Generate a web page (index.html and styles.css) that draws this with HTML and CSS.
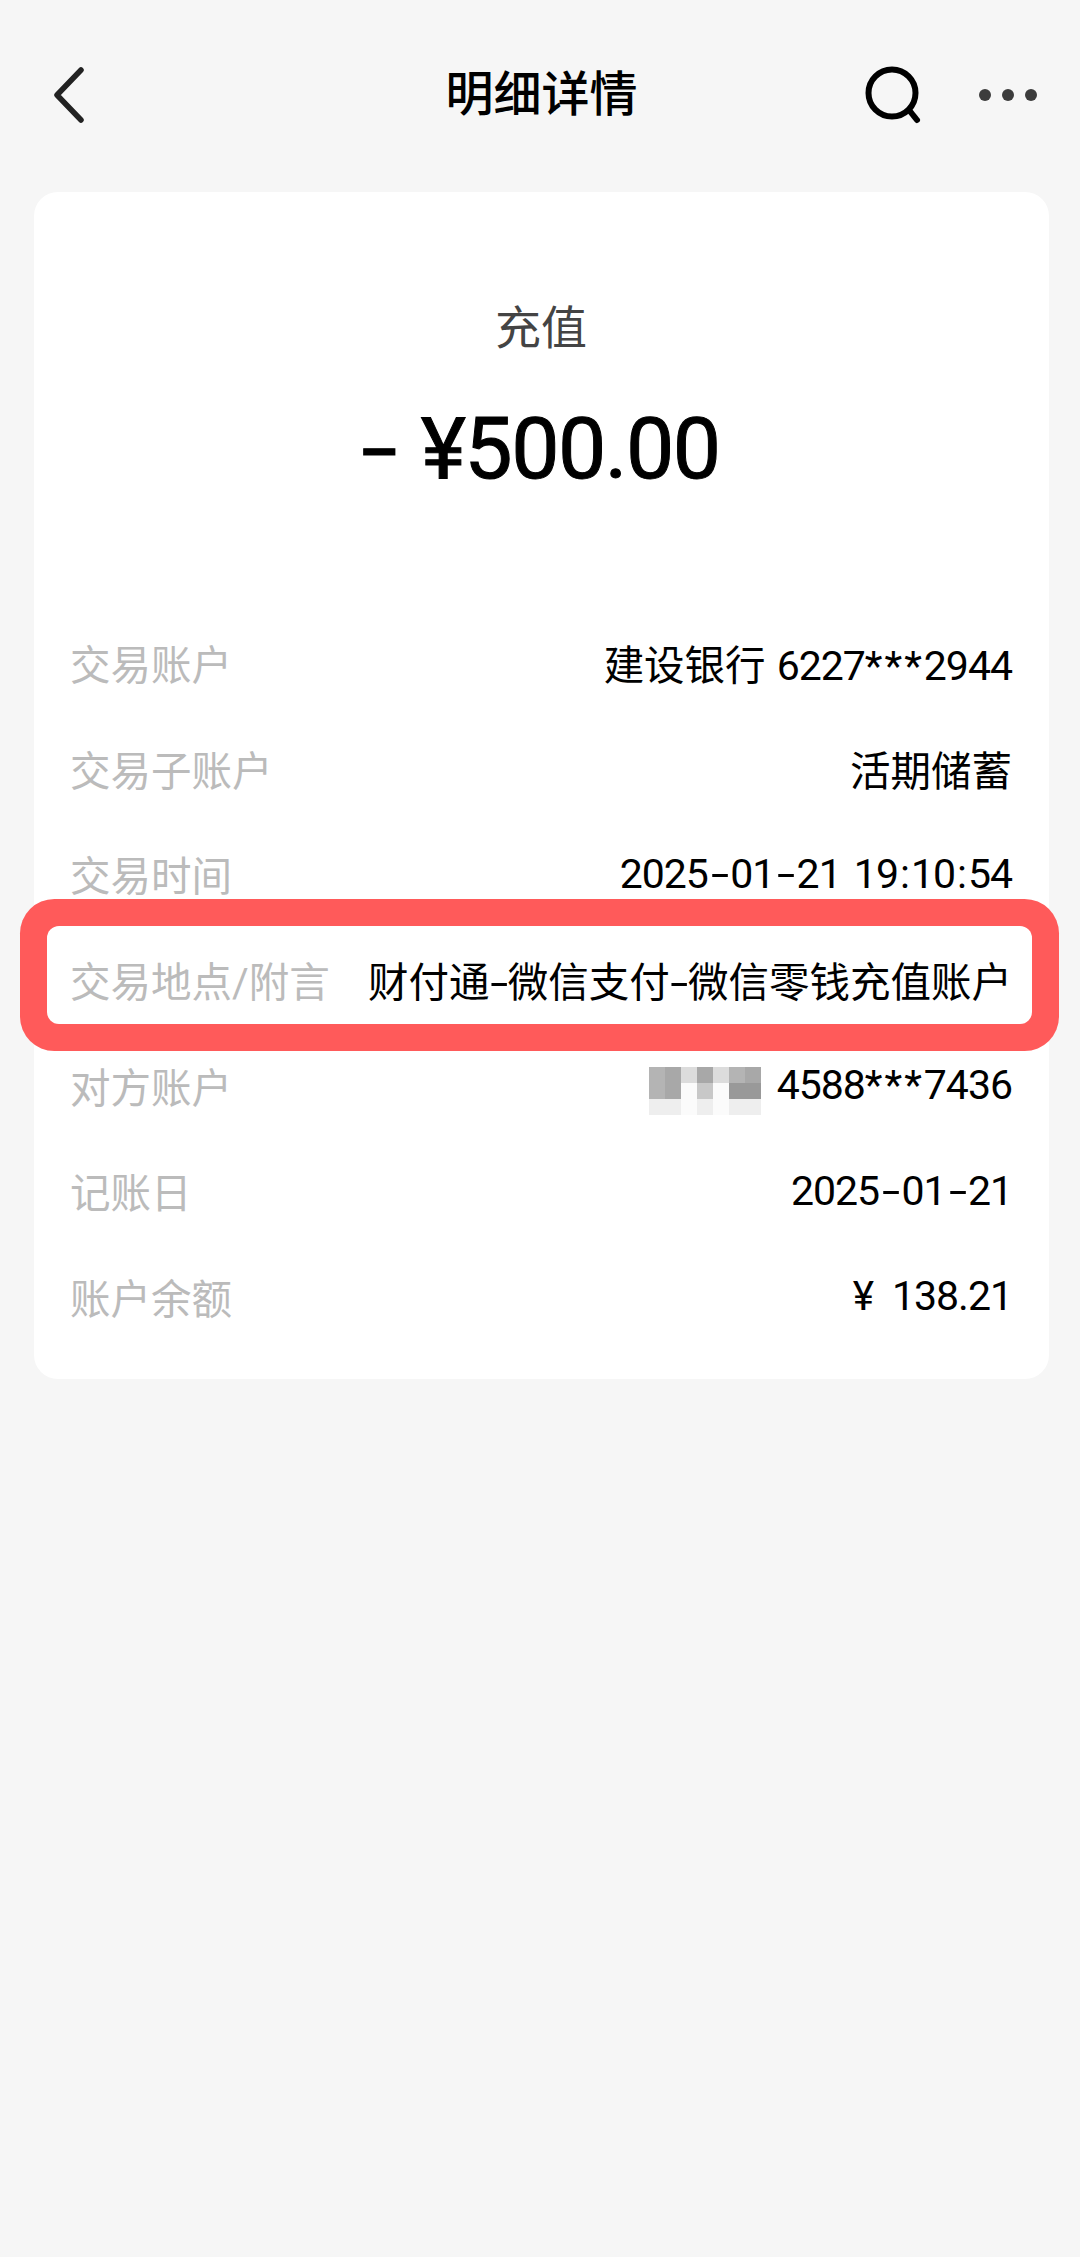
FILE: index.html
```html
<!DOCTYPE html>
<html lang="zh-CN">
<head>
    <meta charset="UTF-8">
    <meta name="viewport" content="width=device-width, initial-scale=1.0">
    <title>明细详情</title>
    <link rel="stylesheet" href="styles.css">
</head>
<body>
    <!-- Top bar -->
    <header class="topbar">
        <div class="topbar-left">
            <svg class="icon-back" width="40" height="56" viewBox="0 0 40 56" fill="none">
                <path d="M35 3 L11 28 L35 53" stroke="#222" stroke-width="5.5" stroke-linecap="round" stroke-linejoin="round"/>
            </svg>
        </div>
        <h1 class="title">明细详情</h1>
        <div class="topbar-right">
            <svg class="icon-search" width="56" height="58" viewBox="0 0 56 58" fill="none">
                <circle cx="27" cy="27" r="23.5" stroke="#000" stroke-width="6"/>
                <path d="M44 44 L52 54" stroke="#000" stroke-width="6" stroke-linecap="round"/>
            </svg>
            <svg class="icon-more" width="58" height="12" viewBox="0 0 58 12" fill="#3c3c3c">
                <circle cx="6" cy="6" r="6"/>
                <circle cx="29" cy="6" r="6"/>
                <circle cx="52" cy="6" r="6"/>
            </svg>
        </div>
    </header>

    <!-- Detail card -->
    <main class="card">
        <div class="summary">
            <div class="summary-type">充值</div>
            <div class="summary-amount"><span class="amount-dash">-</span>¥500.00</div>
        </div>

        <div class="rows">
            <div class="row">
                <span class="label">交易账户</span>
                <span class="value">建设银行 <span class="num">6227<span class="stars">***</span>2944</span></span>
            </div>
            <div class="row">
                <span class="label">交易子账户</span>
                <span class="value">活期储蓄</span>
            </div>
            <div class="row">
                <span class="label">交易时间</span>
                <span class="value"><span class="num">2025<span class="dash">-</span>01<span class="dash">-</span>21 19<span class="colon">:</span>10<span class="colon">:</span>54</span></span>
            </div>
            <div class="row">
                <span class="label">交易地点/附言</span>
                <span class="value">财付通<span class="dash">-</span>微信支付<span class="dash">-</span>微信零钱充值账户</span>
                <div class="highlight"></div>
            </div>
            <div class="row">
                <span class="label">对方账户</span>
                <span class="value value-masked">
                    <span class="mosaic">
                        <i class="s3"></i><i class="s4"></i><i class="s1"></i><i class="s4"></i><i class="s1"></i><i class="s3"></i><i class="s4"></i>
                        <i class="s3"></i><i class="s4"></i><i class="s0"></i><i class="s2"></i><i class="s0"></i><i class="s5"></i><i class="s5"></i>
                        <i class="s6"></i><i class="s6"></i><i class="s0"></i><i class="s6"></i><i class="s0"></i><i class="s6"></i><i class="s6"></i>
                    </span>
                    <span class="num">4588<span class="stars">***</span>7436</span>
                </span>
            </div>
            <div class="row">
                <span class="label">记账日</span>
                <span class="value"><span class="num">2025<span class="dash">-</span>01<span class="dash">-</span>21</span></span>
            </div>
            <div class="row">
                <span class="label">账户余额</span>
                <span class="value"><span class="yen">¥</span> <span class="num">138.21</span></span>
            </div>
        </div>
    </main>
</body>
</html>
```

FILE: styles.css
```css
body {
    margin: 0;
    padding: 0;
    background: #f6f6f6;
    font-family: Roboto, "Noto Sans CJK SC", sans-serif;
    color: #000;
}

.topbar {
    display: grid;
    grid-template-columns: 1fr auto 1fr;
    align-items: center;
    height: 192px;
    padding: 0 43px 3px 46px;
    box-sizing: border-box;
}

.topbar-left,
.topbar-right {
    display: flex;
    align-items: center;
}

.topbar-right {
    justify-content: flex-end;
    gap: 58px;
}

.title {
    margin: 0;
    font-size: 48px;
    font-weight: 500;
    line-height: 60px;
}

.card {
    margin: 0 31px 0 34px;
    padding: 0 37px 30px 36px;
    background: #fff;
    border-radius: 24px;
}

.summary {
    padding-top: 108px;
    text-align: center;
}

.summary-type {
    font-size: 46px;
    line-height: 56px;
    color: #444;
}

.summary-amount {
    margin-top: 43px;
    padding-left: 5px;
    font-size: 86px;
    line-height: 100px;
    letter-spacing: -1.5px;
    -webkit-text-stroke: 1px #000;
}

.amount-dash {
    display: inline-block;
    margin-right: 31px;
    transform: scaleX(1.5);
}

.rows {
    margin-top: 111px;
}

.row {
    position: relative;
    display: flex;
    justify-content: space-between;
    align-items: center;
    height: 105.6px;
    font-size: 40.5px;
}

.label {
    color: #bbb;
}

.value {
    color: #000;
    word-spacing: 1px;
}

.yen {
    margin-right: 7px;
}

/* digits are tall and narrow in the original */
.num {
    font-size: 41px;
    letter-spacing: -1px;
    word-spacing: 4px;
}

.stars {
    letter-spacing: 2px;
}

.dash {
    display: inline-block;
    padding: 0 3.5px;
    transform: scaleX(1.6);
}

.num .dash {
    padding: 0 6px;
}

.colon {
    padding: 0 2px;
}

.value-masked {
    display: flex;
    align-items: center;
    gap: 16px;
}

.mosaic {
    display: grid;
    grid-template-columns: repeat(7, 16px);
    grid-auto-rows: 16px;
    margin-top: 12px;
}

.s0 { background: #fbfbfb; }
.s1 { background: #dcdcdc; }
.s2 { background: #c8c8c8; }
.s3 { background: #b4b4b4; }
.s4 { background: #a8a8a8; }
.s5 { background: #999; }
.s6 { background: #eee; }

/* red annotation round the place row */
.highlight {
    position: absolute;
    left: -23px;
    right: -20px;
    top: -1px;
    bottom: 8px;
    border-radius: 12px;
    box-shadow: 0 0 0 27px #ff5a5a;
    pointer-events: none;
}
```
